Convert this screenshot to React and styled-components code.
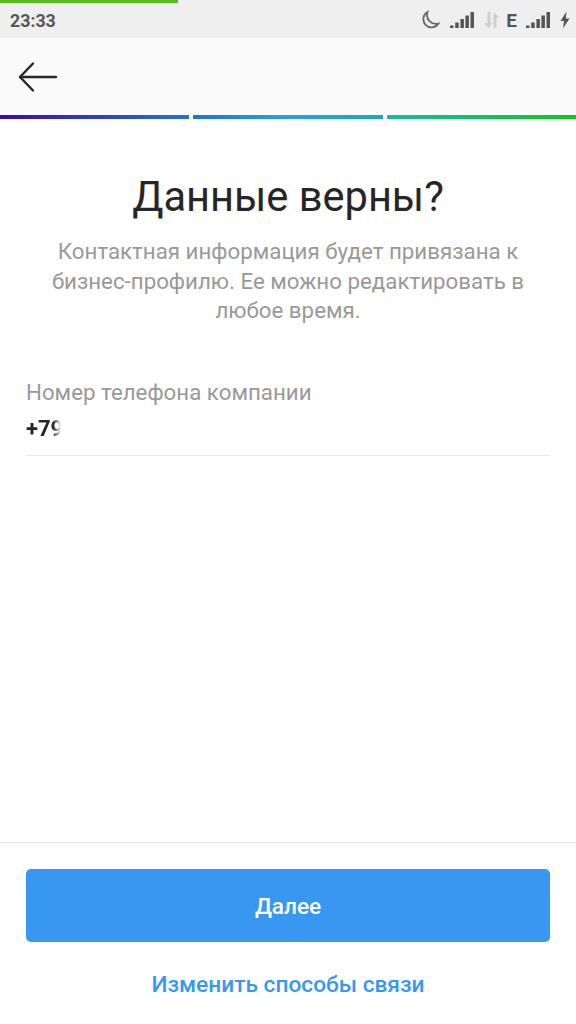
import React from 'react';
import styled, { createGlobalStyle } from 'styled-components';

const GlobalStyle = createGlobalStyle`
  html, body {
    margin: 0;
    padding: 0;
    background: #fff;
  }
  * {
    box-sizing: border-box;
  }
`;

export default function App() {
  return (
    <Page>
      <GlobalStyle />
      <StatusBar>
        <LoadBar />
        <Clock>23:33</Clock>
        <StatusIcons>
          <MoonIcon />
          <SignalIcon />
          <DataIcon />
          <NetType>E</NetType>
          <SignalIcon />
          <BoltIcon />
        </StatusIcons>
      </StatusBar>

      <Header>
        <BackButton aria-label="Назад">
          <svg width="40" height="32" viewBox="0 0 40 32" fill="none" stroke="#262626" strokeWidth="2.4" strokeLinecap="round" strokeLinejoin="round">
            <path d="M2 16 H38" />
            <path d="M15 2.5 L2 16 L15 29.5" />
          </svg>
        </BackButton>
      </Header>

      <Steps>
        <Step $from="#3a09b0" $to="#2173d2" />
        <Step $from="#2173d2" $to="#1eaaa8" $mid="#25a5d8" />
        <Step $from="#1ab8a0" $to="#16c41e" />
      </Steps>

      <Content>
        <Title>Данные верны?</Title>
        <Subtitle>
          Контактная информация будет привязана к бизнес-профилю. Ее можно редактировать в любое время.
        </Subtitle>
        <Field>
          <FieldLabel>Номер телефона компании</FieldLabel>
          <FieldValue>+79</FieldValue>
        </Field>
      </Content>

      <Footer>
        <NextButton>Далее</NextButton>
        <ChangeLink>Изменить способы связи</ChangeLink>
      </Footer>
    </Page>
  );
}

function MoonIcon() {
  return (
    <svg width="20" height="20" viewBox="0 0 20 20" fill="none" stroke="#666" strokeWidth="1.8" strokeLinecap="round">
      <path d="M7.5 2 A8.2 8.2 0 1 0 18.5 13.5 A9 9 0 0 1 7.5 2 Z" />
    </svg>
  );
}

function SignalIcon() {
  return (
    <svg width="24" height="18" viewBox="0 0 24 18" fill="#555">
      <rect x="0" y="14.5" width="3.5" height="2.5" />
      <rect x="5.2" y="11.5" width="3.5" height="5.5" />
      <rect x="10.4" y="8" width="3.5" height="9" />
      <rect x="15.4" y="4.5" width="3.5" height="12.5" />
      <rect x="20.5" y="1" width="3.5" height="16" />
    </svg>
  );
}

function DataIcon() {
  return (
    <svg width="16" height="18" viewBox="0 0 16 18" fill="#cfcfcf">
      <path d="M3.5 1 H6.5 V12 H8 L4.5 17.5 L0.5 12 H3.5 Z" />
      <path d="M9.5 17 V1 L15.5 6.5 H12.5 V17 Z" />
    </svg>
  );
}

function BoltIcon() {
  return (
    <svg width="10" height="18" viewBox="0 0 10 18" fill="#555">
      <path d="M6.5 0.5 L0.5 10 H4 L3 17.5 L9.5 7.5 H5.8 Z" />
    </svg>
  );
}

const Page = styled.div`
  position: relative;
  width: 576px;
  height: 1024px;
  display: flex;
  flex-direction: column;
  background: #fff;
  font-family: Roboto, "Noto Sans", sans-serif;
  overflow: hidden;
`;

const StatusBar = styled.div`
  position: relative;
  height: 38px;
  padding: 0 6px 0 10px;
  display: flex;
  align-items: center;
  justify-content: space-between;
  background: #efefef;
`;

const LoadBar = styled.div`
  position: absolute;
  top: 0;
  left: 0;
  width: 178px;
  height: 3px;
  background: #56bb1c;
`;

const Clock = styled.span`
  font-size: 17.8px;
  font-weight: 700;
  color: #585858;
  margin-top: 2px;
`;

const StatusIcons = styled.div`
  display: flex;
  align-items: center;
  gap: 10px;
  margin-top: 2px;
`;

const NetType = styled.span`
  font-size: 19px;
  font-weight: 700;
  color: #555;
  margin-left: -4px;
  margin-right: -1px;
`;

const Header = styled.header`
  height: 77px;
  padding-left: 18px;
  display: flex;
  align-items: center;
  background: #fafafa;
`;

const BackButton = styled.button`
  padding: 0;
  border: 0;
  background: none;
  display: flex;
`;

const Steps = styled.div`
  display: grid;
  grid-template-columns: repeat(3, 1fr);
  gap: 4px;
  height: 4px;
`;

const Step = styled.div`
  background: linear-gradient(
    to right,
    ${(p) => p.$from},
    ${(p) => (p.$mid ? `${p.$mid},` : '')}
    ${(p) => p.$to}
  );
`;

const Content = styled.main`
  flex: 1;
  padding: 53px 26px 0;
  display: flex;
  flex-direction: column;
  align-items: center;
`;

const Title = styled.h1`
  margin: 0;
  font-size: 41.6px;
  line-height: 50px;
  font-weight: 400;
  color: #262626;
`;

const Subtitle = styled.p`
  margin: 15px 0 0;
  width: 500px;
  font-size: 22.3px;
  line-height: 29.5px;
  text-align: center;
  color: #999;
`;

const Field = styled.div`
  align-self: stretch;
  margin-top: 53px;
  padding-bottom: 13px;
  border-bottom: 1px solid #e6e6e6;
`;

const FieldLabel = styled.div`
  font-size: 22.3px;
  line-height: 26px;
  color: #999;
`;

// номер скрыт на скриншоте, поэтому последняя цифра уходит в белый
const FieldValue = styled.div`
  width: 36px;
  margin-top: 11px;
  overflow: hidden;
  white-space: nowrap;
  font-size: 22px;
  line-height: 26px;
  font-weight: 700;
  color: #262626;
  mask-image: linear-gradient(to right, #000 27px, transparent 35px);
`;

const Footer = styled.footer`
  height: 182px;
  padding: 26px 26px 0;
  display: flex;
  flex-direction: column;
  align-items: center;
  border-top: 1px solid #e6e6e6;
`;

const NextButton = styled.button`
  width: 100%;
  height: 73px;
  padding: 2px 0 0;
  border: 0;
  border-radius: 5px;
  background: #3897f0;
  color: #fff;
  font-family: inherit;
  font-size: 22.6px;
  font-weight: 500;
`;

const ChangeLink = styled.a`
  margin-top: 30px;
  font-size: 22.7px;
  line-height: 26px;
  font-weight: 500;
  color: #3897f0;
`;
